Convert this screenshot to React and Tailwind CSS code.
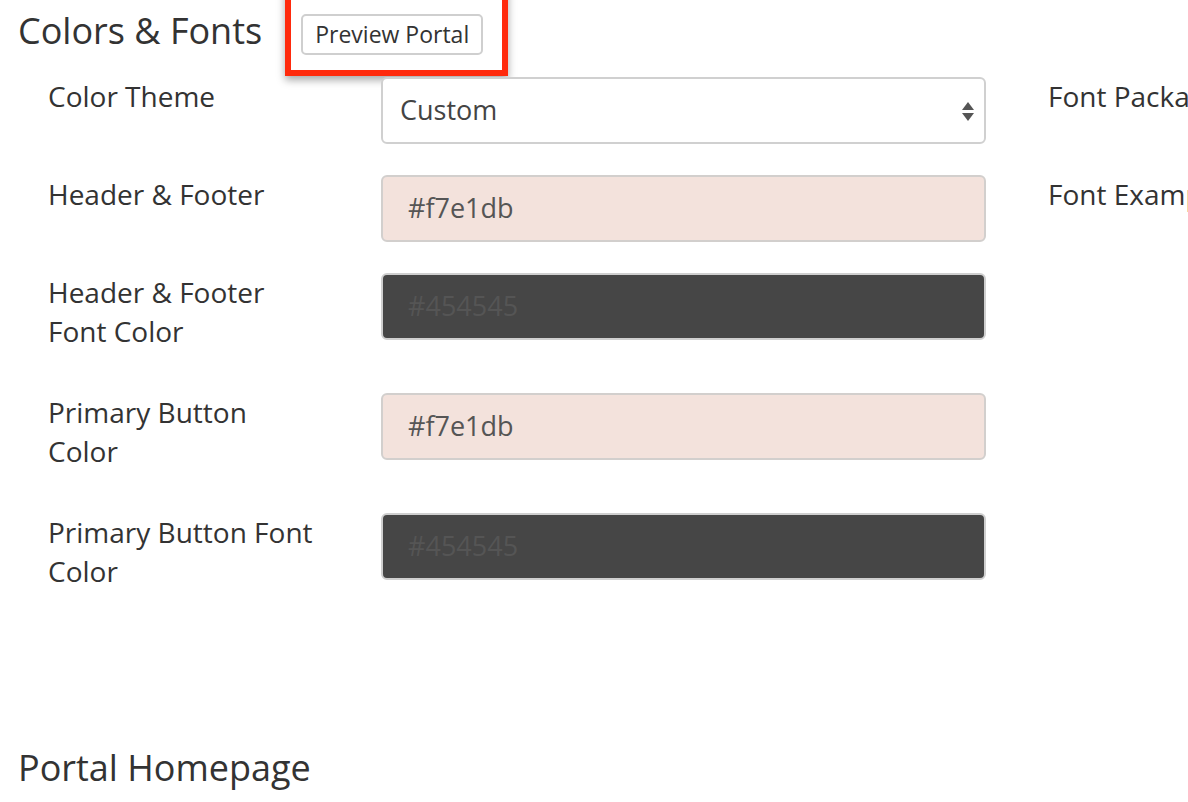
import React from "react";

const font = { fontFamily: '"Open Sans", "Noto Sans", sans-serif' };

function Row({ label, children, right, className = "" }) {
  return (
    <div className={`flex items-start ${className}`}>
      <div className="w-[381px] shrink-0 pl-[48px] pr-[60px] text-[28px] leading-[39px] text-[#333]">
        {label}
      </div>
      <div className="w-[605px] shrink-0">{children}</div>
      <div className="pl-[62px] whitespace-nowrap text-[28px] leading-[39px] text-[#333]">
        {right}
      </div>
    </div>
  );
}

function ColorInput({ value, dark }) {
  return (
    <div
      className={`h-[67px] w-[605px] rounded-[6px] border-2 flex items-center pl-[25px] text-[27px] ${
        dark
          ? "bg-[#464646] border-[#cfcfcf] text-[#555555]"
          : "bg-[#f3e2dc] border-[#d2cfcd] text-[#555555]"
      }`}
    >
      {value}
    </div>
  );
}

export default function App() {
  return (
    <div
      className="w-[1188px] h-[802px] overflow-hidden bg-white relative"
      style={font}
    >
      <div className="flex items-center h-[63px] pl-[18px]">
        <h1 className="text-[36px] leading-[40px] text-[#333] font-normal -mt-[1px]">
          Colors &amp; Fonts
        </h1>
        <div className="relative ml-[39px] mt-[5px]">
          <button className="h-[41px] px-[12px] rounded-[5px] border-2 border-[#cfcfcf] bg-white text-[23px] leading-[37px] text-[#333]">
            Preview Portal
          </button>
          <div className="absolute left-[-16px] right-[-25px] top-[-30px] bottom-[-21px] border-[6px] border-[#ff2a0c] shadow-[0_4px_8px_rgba(0,0,0,0.35)] pointer-events-none" />
        </div>
      </div>

      <div className="mt-[14px]">
        <Row label="Color Theme" right="Font Package" className="mb-[31px]">
          <div className="relative h-[67px] w-[605px] rounded-[6px] border-2 border-[#d0d0d0] bg-white flex items-center pl-[17px] text-[27px] text-[#444]">
            Custom
            <svg
              className="absolute right-[9px] top-1/2 -translate-y-1/2"
              width="14"
              height="26"
              viewBox="0 0 14 26"
            >
              <path d="M7 4 L13 12 L1 12 Z" fill="#555" />
              <path d="M1 15 L13 15 L7 23 Z" fill="#555" />
            </svg>
          </div>
        </Row>
        <Row label="Header & Footer" right="Font Example" className="mb-[31px]">
          <ColorInput value="#f7e1db" />
        </Row>
        <Row label="Header & Footer Font Color" className="mb-[42px]">
          <ColorInput value="#454545" dark />
        </Row>
        <Row label="Primary Button Color" className="mb-[42px]">
          <ColorInput value="#f7e1db" />
        </Row>
        <Row label="Primary Button Font Color">
          <ColorInput value="#454545" dark />
        </Row>
      </div>

      <h2 className="absolute left-[18px] top-[748px] text-[36px] leading-[40px] text-[#333] font-normal">
        Portal Homepage
      </h2>
    </div>
  );
}
